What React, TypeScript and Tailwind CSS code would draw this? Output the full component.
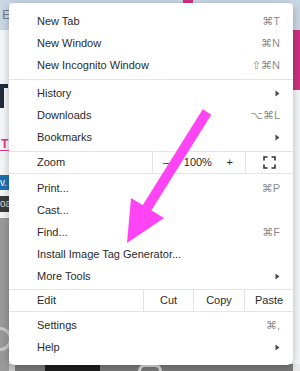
import React from "react";

const font = { fontFamily: '"Liberation Sans", "DejaVu Sans", sans-serif' };

function Arrow() {
  return (
    <svg width="5" height="7" viewBox="0 0 5 7" className="shrink-0">
      <path d="M0.5 0.5 L4.5 3.5 L0.5 6.5 Z" fill="#4a4a4a" />
    </svg>
  );
}

function Item({ label, shortcut, sub }: { label: string; shortcut?: string; sub?: boolean }) {
  return (
    <div className="h-[22px] flex items-center justify-between pl-[28px] pr-[13px]">
      <span className="text-[11px] text-[#2a2a2a]">{label}</span>
      {shortcut && <span className="text-[11px] text-[#8c8c8c]">{shortcut}</span>}
      {sub && <Arrow />}
    </div>
  );
}

function Sep() {
  return <div className="h-px bg-[#e4e4e4] mt-[3px] mb-[2px]" />;
}

// blurred page behind the menu
function Background() {
  return (
    <div className="flex w-[300px] h-[371px] bg-[#f3f5f7]">
      <div className="w-[9px] flex flex-col">
        <div className="h-[30px] bg-[#c9d6e3] text-[13px] text-[#6d8199] pl-[2px] pt-[8px] leading-none">E</div>
        <div className="h-[54px]" />
        <div className="h-[24px] flex">
          <div className="w-[4px] bg-[#1f2a3a]" />
          <div className="w-[4px] h-[4px] bg-[#1f2a3a]" />
        </div>
        <div className="h-[30px]" />
        <div className="h-[13px] border-b border-[#d63c8a] text-[12px] font-bold text-[#d63c8a] leading-[12px] pl-px">T</div>
        <div className="h-[24px]" />
        <div className="h-[15px] bg-[#1e6fb0] text-[10px] text-white leading-[15px]">v.</div>
        <div className="h-[6px]" />
        <div className="h-[16px] bg-[#3a3a3a] text-[10px] text-[#ddd] leading-[16px]">oa</div>
        <div className="h-[6px]" />
        <div className="flex-1 bg-[#9a9a9a] flex flex-col justify-end pb-[20px]">
          <div className="h-[24px] w-[12px] rounded-r-full border-[3px] border-l-0 border-[#c8c8c8]" />
        </div>
      </div>
      <div className="flex-1 flex flex-col">
        <div className="h-[3px] bg-[#c9d6e3] flex pl-[174px]">
          <div className="w-[10px] bg-[#d0307f]" />
        </div>
        <div className="flex-1" />
        <div className="h-[7px] bg-[#7a7a7a] flex">
          <div className="w-[6px] bg-[#c8c8c8]" />
          <div className="w-[30px]" />
          <div className="w-[55px] bg-[#1e1e1e]" />
          <div className="w-[38px]" />
          <div className="w-[24px] rounded-t-full border-[3px] border-b-0 border-[#d8d8d8]" />
        </div>
      </div>
      <div className="w-[7px] flex flex-col">
        <div className="h-[30px] bg-[#c9d6e3]" />
        <div className="h-[60px] bg-[#cc2f7f]" />
        <div className="flex-1" />
        <div className="h-[7px] bg-[#e8e8e8]" />
      </div>
    </div>
  );
}

export default function App() {
  return (
    <div className="relative w-[300px] h-[371px] overflow-hidden" style={font}>
      <Background />
      <div className="absolute left-[9px] top-[3px] w-[284px] h-[362px] bg-white rounded-[6px] shadow-[0_2px_8px_rgba(0,0,0,0.25)] pt-[7px] pb-[6px]">
        <Item label="New Tab" shortcut="⌘T" />
        <Item label="New Window" shortcut="⌘N" />
        <Item label="New Incognito Window" shortcut="⇧⌘N" />
        <Sep />
        <Item label="History" sub />
        <Item label="Downloads" shortcut="⌥⌘L" />
        <Item label="Bookmarks" sub />
        <div className="mt-[3px] mb-[3px] border-y border-[#e4e4e4] h-[23px] flex items-stretch text-[11px] text-[#2a2a2a]">
          <div className="w-[143px] flex items-center pl-[28px]">Zoom</div>
          <div className="w-[94px] border-x border-[#e4e4e4] flex items-center justify-between pl-[10px] pr-[12px]">
            <span>–</span>
            <span>100%</span>
            <span>+</span>
          </div>
          <div className="flex-1 flex items-center justify-center">
            <svg width="13" height="13" viewBox="0 0 13 13" fill="none" stroke="#333" strokeWidth="1.6">
              <path d="M1 4.5V1H4.5M8.5 1H12V4.5M12 8.5V12H8.5M4.5 12H1V8.5" />
            </svg>
          </div>
        </div>
        <Item label="Print..." shortcut="⌘P" />
        <Item label="Cast..." />
        <Item label="Find..." shortcut="⌘F" />
        <Item label="Install Image Tag Generator..." />
        <Item label="More Tools" sub />
        <div className="mt-[2px] mb-[2px] border-y border-[#e4e4e4] h-[23px] flex items-stretch text-[11px] text-[#2a2a2a]">
          <div className="w-[134px] flex items-center pl-[28px]">Edit</div>
          <div className="w-[50px] border-l border-[#e4e4e4] flex items-center justify-center">Cut</div>
          <div className="w-[51px] border-l border-[#e4e4e4] flex items-center justify-center">Copy</div>
          <div className="flex-1 border-l border-[#e4e4e4] flex items-center justify-center">Paste</div>
        </div>
        <Item label="Settings" shortcut="⌘," />
        <Item label="Help" sub />
      </div>
      <svg className="absolute left-0 top-0 pointer-events-none" width="300" height="371">
        <line x1="207" y1="112" x2="145" y2="211" stroke="#ff44f5" strokeWidth="10" />
        <path d="M131 198 L164 218 L127 243 Z" fill="#ff44f5" />
      </svg>
    </div>
  );
}
